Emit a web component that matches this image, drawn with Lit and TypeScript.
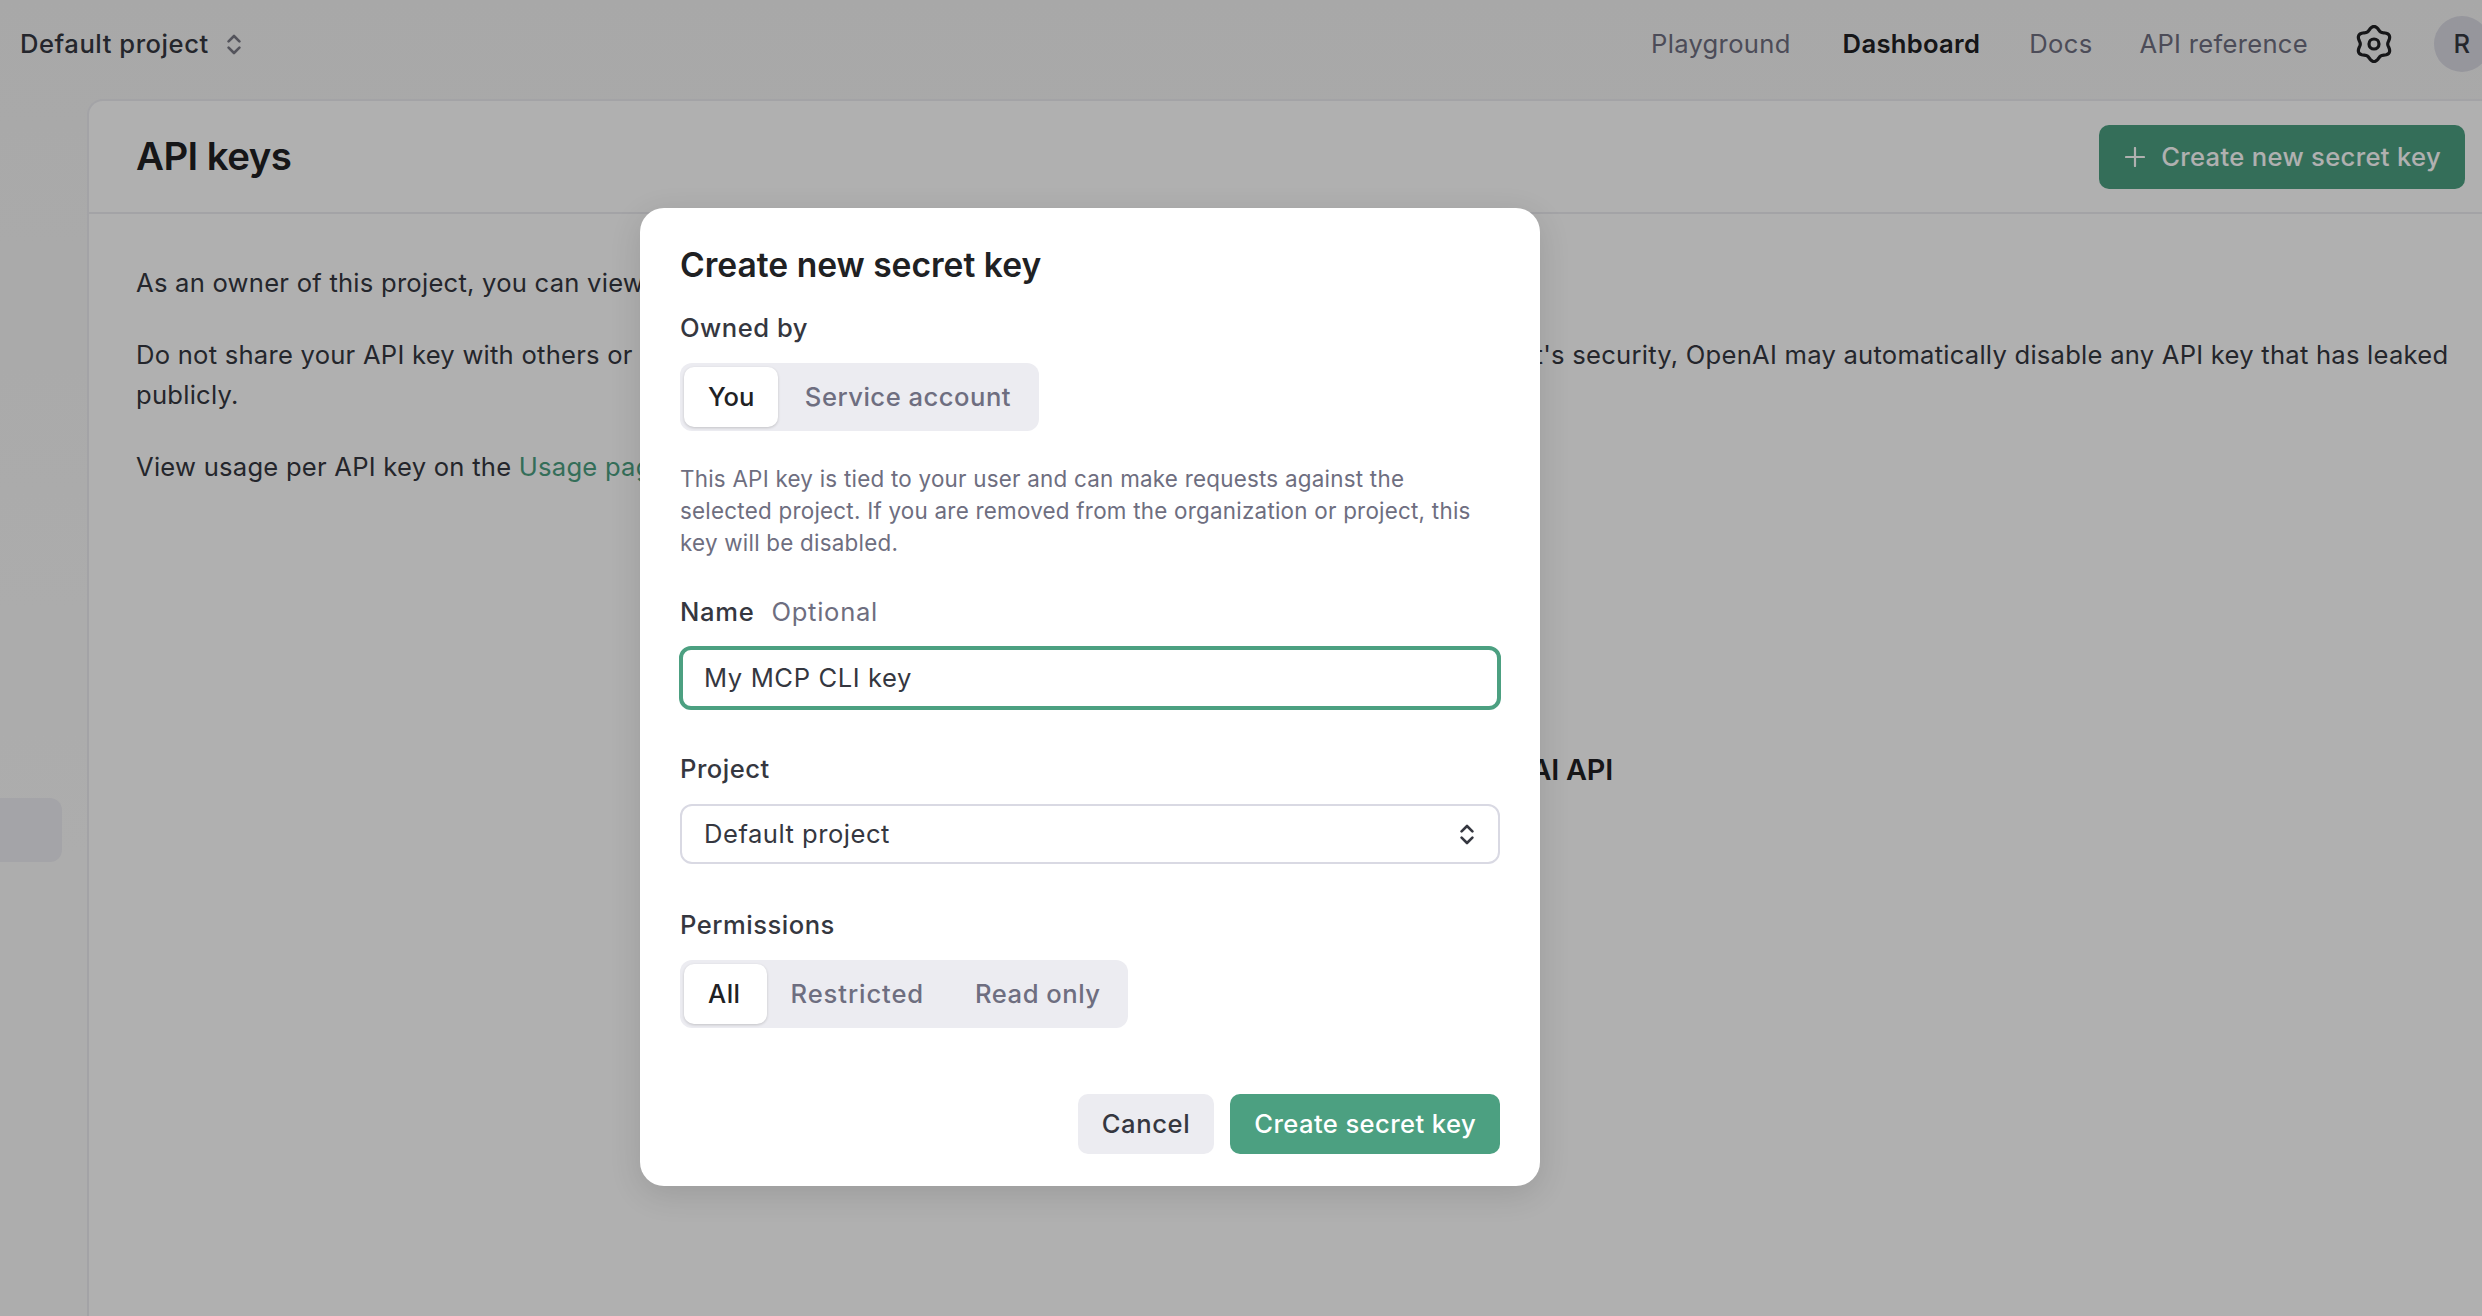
import { LitElement, html, css, svg } from "lit";
import { customElement } from "lit/decorators.js";

const flowerPath = (() => {
  const pts: string[] = [];
  for (let i = 0; i < 96; i++) {
    const a = (i / 96) * Math.PI * 2;
    const r = 15.6 + 1.9 * Math.cos(6 * a);
    const x = 20 + r * Math.sin(a);
    const y = 20 - r * Math.cos(a);
    pts.push(`${i ? "L" : "M"}${x.toFixed(2)} ${y.toFixed(2)}`);
  }
  return pts.join("") + "Z";
})();

const chevrons = () => html`<svg viewBox="0 0 14 21" fill="none" stroke="currentColor" stroke-width="2.6" stroke-linecap="round" stroke-linejoin="round"><path d="M1.6 7.4 7 2l5.4 5.4"/><path d="M1.6 13.6 7 19l5.4-5.4"/></svg>`;

@customElement("app-root")
export class AppRoot extends LitElement {
  static styles = css`
    :host { display: block; width: 2482px; height: 1316px; overflow: hidden; position: relative; font-family: Inter, "Liberation Sans", sans-serif; font-size: 25.6px; line-height: 40px; color: #353740; letter-spacing: 0.3px; }
    .page { width: 2511px; height: 1316px; background: linear-gradient(#f4f4f4, #fbfbfb 65%); display: flex; flex-direction: column; }
    .top { height: 99px; flex: none; display: flex; align-items: center; padding: 0 21px 11px 20px; box-sizing: border-box; }
    .proj { font-weight: 500; display: flex; align-items: center; gap: 18px; letter-spacing: 0.53px; }
    .proj svg { width: 14px; height: 21px; color: #7a7a86; }
    .nav { margin-left: auto; display: flex; align-items: center; color: #6e6e80; }
    .nav span { margin-right: 49px; }
    .nav .on { color: #202123; font-weight: 600; margin-left: 3px; }
    .nav .docs { margin-right: 47px; }
    .gear { width: 40px; height: 40px; margin: 0 40px 0 -3px; color: #202123; }
    .avatar { width: 56px; height: 56px; border-radius: 50%; background: #d9d9e3; display: flex; align-items: center; justify-content: center; font-weight: 500; color: #353740; }
    .body { flex: 1; display: flex; min-height: 0; }
    .side { width: 87px; flex: none; display: flex; flex-direction: column; padding-top: 699px; box-sizing: border-box; }
    .side div { width: 62px; height: 64px; background: #eeeef3; border-radius: 0 12px 12px 0; }
    .card { flex: 1; background: #fff; border: 2px solid #ececf1; border-bottom: 0; border-right: 0; border-radius: 16px 0 0 0; box-sizing: border-box; }
    .cardhead { height: 113px; box-sizing: border-box; border-bottom: 2px solid #ececf1; display: flex; align-items: center; justify-content: space-between; padding: 0 46px 0 47px; }
    h1 { margin: 0 0 2px; font-size: 38.4px; font-weight: 600; color: #202123; letter-spacing: -0.55px; }
    .btn-new { height: 64px; box-sizing: border-box; background: #4ca081; color: #fff; border-radius: 10px; display: flex; align-items: center; gap: 16px; padding: 0 24px 0 26px; font-weight: 500; letter-spacing: 0.33px; }
    .btn-new svg { width: 20px; height: 20px; }
    .content { padding: 49px 46px 0 47px; letter-spacing: 0.24px; }
    .content p { margin: 0 0 32px; }
    .content a { color: #4ca081; text-decoration: none; }
    .empty { display: flex; justify-content: flex-end; padding-right: 852px; margin-top: 263px; font-weight: 600; font-size: 28.8px; color: #202123; letter-spacing: -0.2px; }
    .overlay { position: absolute; inset: 0; background: rgba(0,0,0,.31); padding: 208px 0 0 640px; box-sizing: border-box; }
    .modal { width: 900px; height: 978px; box-sizing: border-box; background: #fff; border-radius: 24px; padding: 37px 40px 32px; box-shadow: 0 8px 32px rgba(0,0,0,.12); letter-spacing: 0.5px; }
    h2 { margin: 0; font-size: 33.6px; font-weight: 600; color: #202123; letter-spacing: 0; }
    .label { font-weight: 500; color: #353740; letter-spacing: 0.5px; }
    .name { letter-spacing: 0.7px; }
    .mt23 { margin-top: 23px; }
    .mt33 { margin-top: 33px; }
    .mt39 { margin-top: 39px; }
    .mt41 { margin-top: 41px; }
    .opt { color: #6e6e80; font-weight: 400; margin-left: 17px; letter-spacing: 0.7px; }
    .seg { display: inline-flex; vertical-align: top; height: 68px; padding: 4px; box-sizing: border-box; background: #ececf1; border-radius: 12px; margin-top: 15px; color: #6e6e80; font-weight: 500; }
    .seg span { display: flex; align-items: center; padding: 0 24px; border-radius: 10px; }
    .seg .act { background: #fff; color: #202123; box-shadow: 0 1px 3px rgba(0,0,0,.18); }
    .seg .you { letter-spacing: 0; }
    .seg .svc { padding-left: 26.4px; }
    .seg .all { padding-right: 26px; }
    .seg .wide { letter-spacing: 0.9px; padding-right: 27px; }
    .desc { margin: 32px 0 0; font-size: 22.4px; line-height: 32px; color: #6e6e80; letter-spacing: 0.24px; }
    .input { height: 64px; margin: 14px -1px 0; box-sizing: border-box; border: 4px solid #4ca081; border-radius: 12px; display: flex; align-items: center; padding: 0 21px; color: #353740; letter-spacing: 0.6px; }
    .select { height: 60px; margin-top: 15px; box-sizing: border-box; border: 2px solid #d9d9e3; border-radius: 12px; display: flex; align-items: center; justify-content: space-between; padding: 0 24px 0 22px; }
    .select svg { width: 14px; height: 21px; color: #353740; }
    .actions { display: flex; justify-content: flex-end; gap: 16px; margin-top: 66px; letter-spacing: 0.4px; }
    .actions div { height: 60px; display: flex; align-items: center; padding: 0 24px; border-radius: 10px; font-weight: 500; }
    .cancel { background: #ececf1; color: #353740; letter-spacing: 0.6px; }
    .create { background: #4ca081; color: #fff; }
  `;

  render() {
    return html`
      <div class="page">
        <header class="top">
          <div class="proj">Default project ${chevrons()}</div>
          <nav class="nav">
            <span>Playground</span><span class="on">Dashboard</span><span class="docs">Docs</span><span>API reference</span>
            <svg class="gear" viewBox="0 0 40 40" fill="none" stroke="currentColor" stroke-width="3.2" stroke-linejoin="round">
              ${svg`<path d=${flowerPath}/><circle cx="20" cy="20" r="5"/>`}
            </svg>
            <div class="avatar">R</div>
          </nav>
        </header>
        <div class="body">
          <aside class="side"><div></div></aside>
          <main class="card">
            <div class="cardhead">
              <h1>API keys</h1>
              <div class="btn-new"><svg viewBox="0 0 20 20" fill="none" stroke="currentColor" stroke-width="2.2" stroke-linecap="round"><path d="M10 1v18M1 10h18"/></svg>Create new secret key</div>
            </div>
            <div class="content">
              <p>As an owner of this project, you can view and manage all API keys in this project.</p>
              <p>Do not share your API key with others or expose it in the browser or other client-side code. To protect your project's security, OpenAI may automatically disable any API key that has leaked<br>publicly.</p>
              <p>View usage per API key on the <a>Usage page</a>.</p>
              <div class="empty">Create an API key to access the OpenAI API</div>
            </div>
          </main>
        </div>
      </div>
      <div class="overlay">
        <section class="modal">
          <h2>Create new secret key</h2>
          <div class="label mt23">Owned by</div>
          <div class="seg"><span class="act you">You</span><span class="svc">Service account</span></div>
          <p class="desc">This API key is tied to your user and can make requests against the<br>selected project. If you are removed from the organization or project, this<br>key will be disabled.</p>
          <div class="label mt33"><span class="name">Name</span><span class="opt">Optional</span></div>
          <div class="input">My MCP CLI key</div>
          <div class="label mt39">Project</div>
          <div class="select">Default project ${chevrons()}</div>
          <div class="label mt41">Permissions</div>
          <div class="seg"><span class="act all">All</span><span class="wide">Restricted</span><span>Read only</span></div>
          <div class="actions"><div class="cancel">Cancel</div><div class="create">Create secret key</div></div>
        </section>
      </div>
    `;
  }
}
